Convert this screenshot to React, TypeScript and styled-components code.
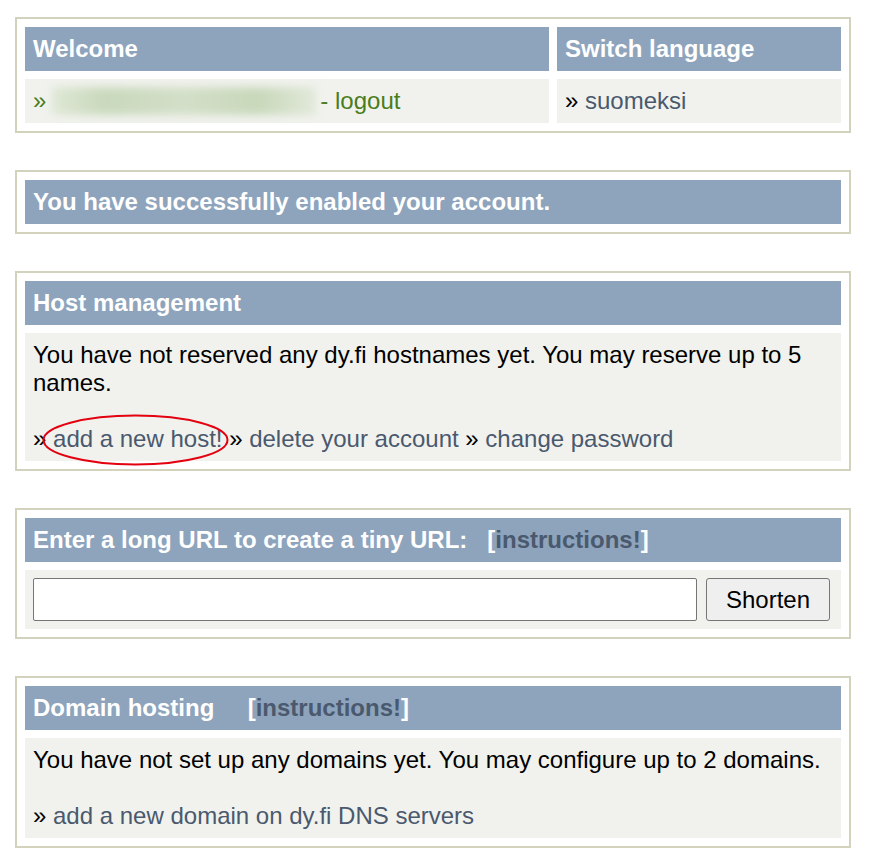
import styled, { createGlobalStyle } from "styled-components";

const GlobalStyle = createGlobalStyle`
    body {
        margin: 0;
        background: #fff;
        font-family: "Liberation Sans", Arial, sans-serif;
        font-size: 24px;
        color: #000;
    }
`;

const Page = styled.div`
    padding: 17px 0 0 15px;
    display: flex;
    flex-direction: column;
    gap: 37px;
`;

const Box = styled.div`
    width: 816px;
    border: 2px solid #d3d3bd;
    background: #fff;
    padding: 8px;
    display: grid;
    gap: 8px;
`;

const Row = styled.div<{ $cols?: string }>`
    display: grid;
    grid-template-columns: ${(p) => p.$cols || "1fr"};
    gap: 8px;
`;

const Head = styled.div`
    background: #8ea4bc;
    color: #fff;
    font-weight: 700;
    line-height: 28px;
    padding: 8px 8px;
    white-space: pre;
`;

const Cell = styled.div`
    background: #f1f2ee;
    line-height: 28px;
    padding: 8px 8px;
`;

const Link = styled.a<{ $green?: boolean }>`
    color: ${(p) => (p.$green ? "#4a7d1b" : "#4a596d")};
    text-decoration: none;
    cursor: pointer;
`;

const Green = styled.span`
    color: #4a7d1b;
`;

const Blurred = styled.span`
    display: inline-block;
    vertical-align: top;
    width: 264px;
    height: 28px;
    margin: 0 4px 0 6px;
    background: linear-gradient(90deg, #dfe8d6 0%, #c9d9bc 20%, #d3dfc8 50%, #c8d8ba 78%, #e2e9da 100%);
    filter: blur(4px);
`;

const Bracket = styled.span`
    color: #fff;
`;

const HeadLink = styled.a`
    color: #4a596d;
    text-decoration: none;
`;

const Circled = styled.span`
    position: relative;
`;

const Ellipse = styled.svg`
    position: absolute;
    left: -11px;
    top: -11px;
    width: 187px;
    height: 52px;
    pointer-events: none;
    overflow: visible;
`;

const Gap = styled.div`
    height: 28px;
`;

const FormRow = styled.div`
    background: #f1f2ee;
    padding: 8px 11px 8px 8px;
    display: flex;
    gap: 9px;
    align-items: center;
`;

const UrlInput = styled.input`
    flex: 1;
    height: 43px;
    box-sizing: border-box;
    border: 1px solid #767676;
    border-radius: 2px;
    background: #fff;
    font-family: "Liberation Sans", Arial, sans-serif;
    font-size: 24px;
`;

const Button = styled.button`
    width: 124px;
    height: 43px;
    box-sizing: border-box;
    border: 1px solid #767676;
    border-radius: 3px;
    background: #efefef;
    color: #000;
    font-family: "Liberation Sans", Arial, sans-serif;
    font-size: 24px;
    padding: 0;
`;

export default function App() {
    return (
        <>
            <GlobalStyle />
            <Page>
                <Box>
                    <Row $cols="524px 1fr">
                        <Head>Welcome</Head>
                        <Head>Switch language</Head>
                        <Cell>
                            <Green>»</Green>
                            <Blurred />
                            <Link $green>- logout</Link>
                        </Cell>
                        <Cell>
                            » <Link>suomeksi</Link>
                        </Cell>
                    </Row>
                </Box>

                <Box>
                    <Head>You have successfully enabled your account.</Head>
                </Box>

                <Box>
                    <Head>Host management</Head>
                    <Cell>
                        You have not reserved any dy.fi hostnames yet. You may reserve up to 5 names.
                        <Gap />
                        »{" "}
                        <Circled>
                            <Link>add a new host!</Link>
                            <Ellipse viewBox="0 0 187 52">
                                <ellipse cx="93.5" cy="26" rx="92" ry="24.5" fill="none" stroke="#e3000f" strokeWidth="2" />
                            </Ellipse>
                        </Circled>
                        {" "}» <Link>delete your account</Link> » <Link>change password</Link>
                    </Cell>
                </Box>

                <Box>
                    <Head>
                        {"Enter a long URL to create a tiny URL:   "}
                        <Bracket>[</Bracket>
                        <HeadLink>instructions!</HeadLink>
                        <Bracket>]</Bracket>
                    </Head>
                    <FormRow>
                        <UrlInput type="text" />
                        <Button>Shorten</Button>
                    </FormRow>
                </Box>

                <Box>
                    <Head>
                        {"Domain hosting     "}
                        <Bracket>[</Bracket>
                        <HeadLink>instructions!</HeadLink>
                        <Bracket>]</Bracket>
                    </Head>
                    <Cell>
                        You have not set up any domains yet. You may configure up to 2 domains.
                        <Gap />
                        » <Link>add a new domain on dy.fi DNS servers</Link>
                    </Cell>
                </Box>
            </Page>
        </>
    );
}
